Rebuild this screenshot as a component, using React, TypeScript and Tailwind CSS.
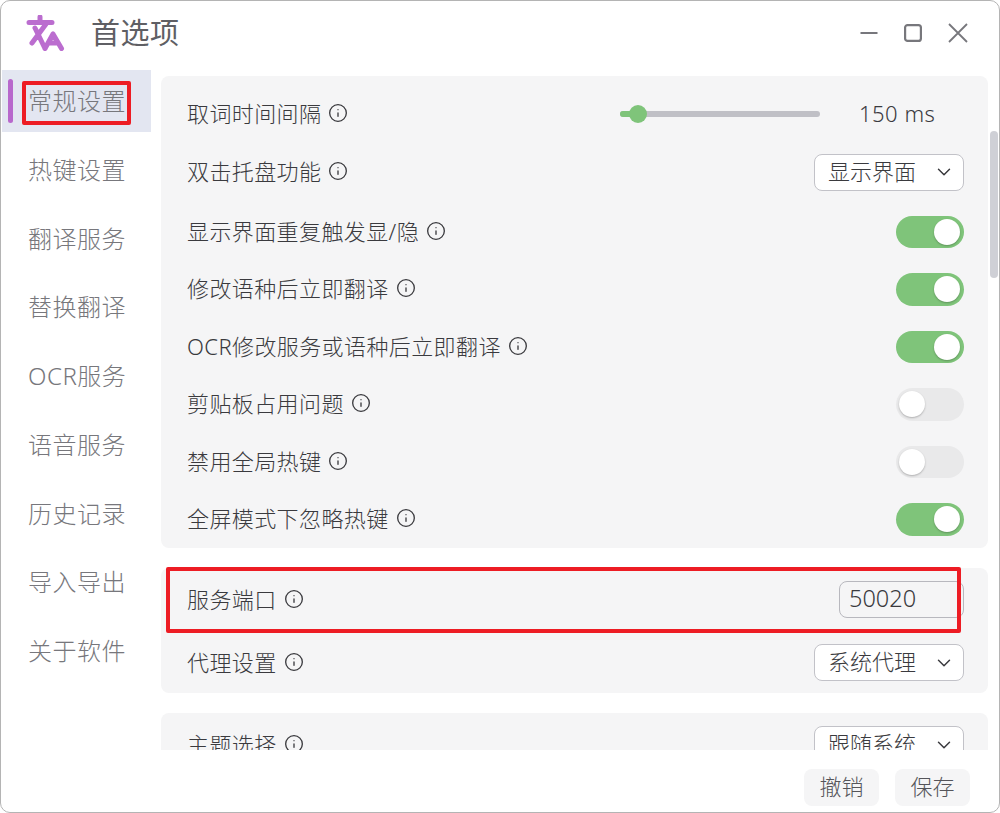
import React from "react";
import { ChevronDown, Info } from "lucide-react";

const navItems = ["常规设置", "热键设置", "翻译服务", "替换翻译", "OCR服务", "语音服务", "历史记录", "导入导出", "关于软件"];

const Label = ({ text }: { text: string }) => (
  <div className="flex items-center gap-[7px]">
    <span className="-translate-y-[1px] text-[22px] font-light leading-[30px] tracking-[0.4px] text-[#3a3a3e]">{text}</span>
    <Info size={20} strokeWidth={1.6} className="-translate-y-[1px] text-[#3a3a3e]" />
  </div>
);

const Toggle = ({ on }: { on: boolean }) => (
  <div className={on ? "flex h-[32.5px] w-[68px] items-center justify-end rounded-full bg-[#7fc47a] pl-[3px] pr-[4px]" : "flex h-[32.5px] w-[68px] items-center justify-start rounded-full bg-[#e9e9ea] pl-[3px] pr-[4px]"}>
    <div className="h-[26px] w-[26px] rounded-full bg-white shadow-[0_1px_2px_rgba(0,0,0,0.25)]" />
  </div>
);

const Select = ({ value }: { value: string }) => (
  <div className="flex h-[37px] w-[150px] items-center justify-between rounded-[8px] border border-[#c2c2c8] bg-white pl-[13px] pr-[8px]">
    <span className="-translate-y-[1px] text-[22px] font-light text-[#3a3a3e]">{value}</span>
    <ChevronDown size={22} strokeWidth={1.6} className="text-[#3a3a3e]" />
  </div>
);

const Row = ({ text, children }: { text: string; children: React.ReactNode }) => (
  <div className="flex h-[58px] items-center justify-between pl-[26px] pr-[24px]">
    <Label text={text} />
    {children}
  </div>
);

const ToggleRow = ({ text, on }: { text: string; on: boolean }) => (
  <div className="flex h-[57.5px] items-center justify-between pl-[26px] pr-[24px]">
    <Label text={text} />
    <Toggle on={on} />
  </div>
);

const TallRow = ({ text, children }: { text: string; children: React.ReactNode }) => (
  <div className="flex h-[63px] items-center justify-between pl-[26px] pr-[24px]">
    <Label text={text} />
    {children}
  </div>
);

const App = () => {
  return (
    <div
      className="relative flex h-[813px] w-[1000px] flex-col overflow-hidden rounded-[10px] border border-[#b4b4b4] bg-white"
      style={{ fontFamily: '"Noto Sans", "Noto Sans CJK SC", sans-serif' }}
    >
      {/* title bar */}
      <div className="flex h-[69px] shrink-0 items-center justify-between pb-[6px] pl-[25px] pr-[31px]">
        <div className="flex items-center gap-[25px]">
          <svg width="40" height="36" viewBox="26 14 40 36" fill="none" stroke="#bb6dcf" strokeWidth="5" strokeLinecap="round">
            <path d="M29 21.5H52M40 16V21M46 23L32 42M35 27L45 47.5M53 33L61.5 47.5M53 33L45 47.5M48 42H58" />
          </svg>
          <span className="text-[29px] tracking-[0.5px] text-[#5f5f64]">首选项</span>
        </div>
        <div className="flex items-center gap-[26px] text-[#77777c]">
          <svg width="18" height="18" viewBox="0 0 18 18" fill="none" stroke="currentColor" strokeWidth="2">
            <path d="M0.5 9H17.5" />
          </svg>
          <svg width="18" height="18" viewBox="0 0 18 18" fill="none" stroke="currentColor" strokeWidth="2.2">
            <rect x="1.1" y="1.1" width="15.8" height="15.8" rx="2.5" />
          </svg>
          <svg width="20" height="20" viewBox="0 0 20 20" fill="none" stroke="currentColor" strokeWidth="1.8">
            <path d="M1 1L19 19M19 1L1 19" />
          </svg>
        </div>
      </div>

      <div className="flex min-h-0 flex-1">
        {/* sidebar */}
        <div className="flex w-[160px] shrink-0 flex-col gap-[6.75px] pl-[1px]">
          {navItems.map((item, i) => (
            <div key={item} className={i === 0 ? "relative flex h-[62px] w-[149px] items-center bg-[#e3e6f1] pl-[26px]" : "flex h-[62px] w-[149px] items-center pl-[26px]"}>
              {i === 0 && <div className="absolute left-[6px] top-[9px] h-[44px] w-[5px] rounded-full bg-[#b868cc]" />}
              <span className="text-[24px] font-light tracking-[0.5px] text-[#77777c]">{item}</span>
            </div>
          ))}
        </div>

        {/* settings */}
        <div className="flex min-w-0 flex-1 flex-col">
          <div className="h-[680px] overflow-hidden pr-[11px] pt-[6px]">
            <div className="flex flex-col gap-[20px]">
              <div className="rounded-[8px] bg-[#f5f5f6] pt-[9px]">
                <Row text="取词时间间隔">
                  <div className="flex items-center">
                    <div className="relative h-[6px] w-[200px] rounded-full bg-[#c0c0c6]">
                      <div className="h-[6px] w-[18px] rounded-full bg-[#7fc47a]" />
                      <div className="absolute left-[9px] top-[-6px] h-[18px] w-[18px] rounded-full bg-[#7fc47a]" />
                    </div>
                    <span className="ml-[39px] mr-[28px] w-[77px] -translate-y-[1px] text-[22px] font-light tracking-[0.5px] text-[#3a3a3e]">150 ms</span>
                  </div>
                </Row>
                <Row text="双击托盘功能"><Select value="显示界面" /></Row>
                <div className="mt-[2px]">
                  <ToggleRow text="显示界面重复触发显/隐" on />
                  <ToggleRow text="修改语种后立即翻译" on />
                  <ToggleRow text="OCR修改服务或语种后立即翻译" on />
                  <ToggleRow text="剪贴板占用问题" on={false} />
                  <ToggleRow text="禁用全局热键" on={false} />
                  <ToggleRow text="全屏模式下忽略热键" on />
                </div>
              </div>

              <div className="h-[125px] rounded-[8px] bg-[#f5f5f6]">
                <TallRow text="服务端口">
                  <div className="flex h-[37px] w-[125px] items-center rounded-[8px] border border-[#b8b8be] pl-[9px] text-[23.5px] font-light text-[#3a3a3e]">
                    <span className="-translate-y-[1px]">50020</span>
                  </div>
                </TallRow>
                <TallRow text="代理设置"><Select value="系统代理" /></TallRow>
              </div>

              <div className="rounded-[8px] bg-[#f5f5f6]">
                <TallRow text="主题选择"><Select value="跟随系统" /></TallRow>
              </div>
            </div>
          </div>

          {/* footer */}
          <div className="flex flex-1 items-start justify-end gap-[16px] pr-[29px] pt-[19px]">
            <div className="flex h-[37px] w-[75px] items-center justify-center rounded-[8px] bg-[#f5f5f6] text-[22px] font-light text-[#55555a]">
              <span className="-translate-y-[1px]">撤销</span>
            </div>
            <div className="flex h-[37px] w-[75px] items-center justify-center rounded-[8px] bg-[#f5f5f6] text-[22px] font-light text-[#55555a]">
              <span className="-translate-y-[1px]">保存</span>
            </div>
          </div>
        </div>
      </div>

      {/* scrollbar */}
      <div className="absolute left-[989px] top-[130px] h-[147px] w-[8px] rounded-full bg-[#cfd0d6]" />

      {/* red annotation boxes */}
      <div className="absolute left-[21px] top-[80px] h-[44px] w-[109px] rounded-[2px] border-[4px] border-[#ed1c24]" />
      <div className="absolute left-[165px] top-[566px] h-[66px] w-[795px] rounded-[2px] border-[4px] border-[#ed1c24]" />
    </div>
  );
};

export default App;
